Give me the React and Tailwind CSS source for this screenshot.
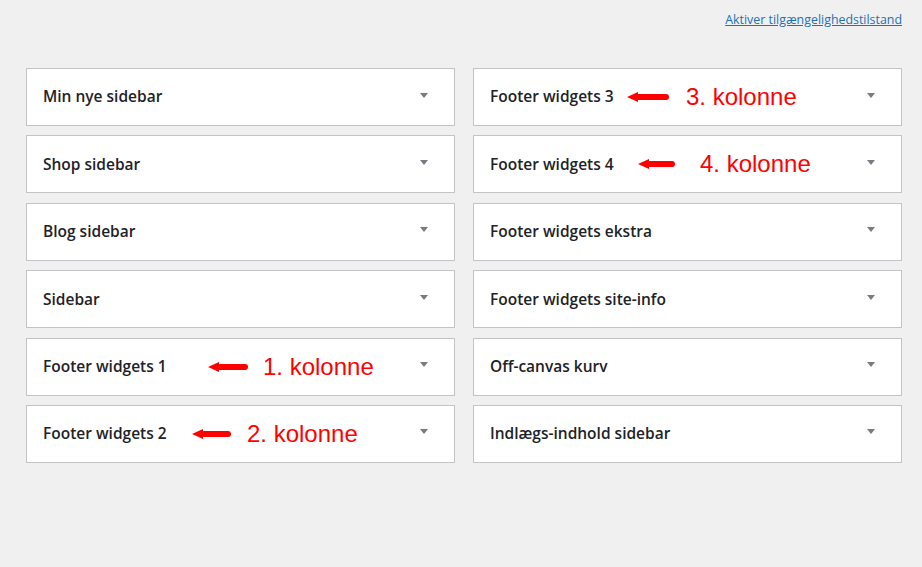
const left = [
  "Min nye sidebar",
  "Shop sidebar",
  "Blog sidebar",
  "Sidebar",
  "Footer widgets 1",
  "Footer widgets 2",
];

const right = [
  "Footer widgets 3",
  "Footer widgets 4",
  "Footer widgets ekstra",
  "Footer widgets site-info",
  "Off-canvas kurv",
  "Indlægs-indhold sidebar",
];

// red hand-drawn pointer used for the column notes
function Pointer({ width }) {
  return (
    <svg width={width} height="12" viewBox={`0 0 ${width} 12`} className="block">
      <path d={`M0 6 L11 1 L11 11 Z`} fill="#ff0000" />
      <rect x="9" y="3" width={width - 9} height="6" rx="3" fill="#ff0000" />
    </svg>
  );
}

function Note({ label, arrowX, arrowW, textX }) {
  return (
    <>
      <div className="absolute top-1/2 -translate-y-1/2" style={{ left: arrowX }}>
        <Pointer width={arrowW} />
      </div>
      <span
        className="absolute top-1/2 -translate-y-1/2 text-[24px] leading-none text-[#ff0000] whitespace-nowrap"
        style={{ left: textX, fontFamily: '"Liberation Sans", Arial, sans-serif' }}
      >
        {label}
      </span>
    </>
  );
}

function SidebarBox({ title, note }) {
  return (
    <div className="relative flex h-[58px] items-center justify-between border border-[#c3c4c7] bg-white pl-4 pr-[26px]">
      <h2 className="text-[15.5px] font-semibold text-[#1d2327]">{title}</h2>
      <span className="mb-1 h-0 w-0 border-x-[4px] border-t-[5px] border-x-transparent border-t-[#787c82]" />
      {note}
    </div>
  );
}

export default function App() {
  return (
    <div
      className="min-h-[567px] w-[922px] bg-[#f0f0f1] pl-[26px] pr-[20px]"
      style={{ fontFamily: '"Open Sans", "Noto Sans", sans-serif' }}
    >
      <div className="flex h-[68px] items-start justify-end pt-[12px]">
        <a href="#" className="text-[12.4px] leading-4 text-[#2271b1] underline">
          Aktiver tilgængelighedstilstand
        </a>
      </div>
      <div className="grid grid-cols-2 gap-x-[18px] gap-y-[9.4px]">
        {left.map((t, i) => (
          <div key={t} className="contents">
            <SidebarBox
              title={t}
              note={
                i === 4 ? (
                  <Note label="1. kolonne" arrowX={181} arrowW={40} textX={236} />
                ) : i === 5 ? (
                  <Note label="2. kolonne" arrowX={165} arrowW={39} textX={220} />
                ) : null
              }
            />
            <SidebarBox
              title={right[i]}
              note={
                i === 0 ? (
                  <Note label="3. kolonne" arrowX={153} arrowW={42} textX={212} />
                ) : i === 1 ? (
                  <Note label="4. kolonne" arrowX={164} arrowW={37} textX={226} />
                ) : null
              }
            />
          </div>
        ))}
      </div>
    </div>
  );
}
